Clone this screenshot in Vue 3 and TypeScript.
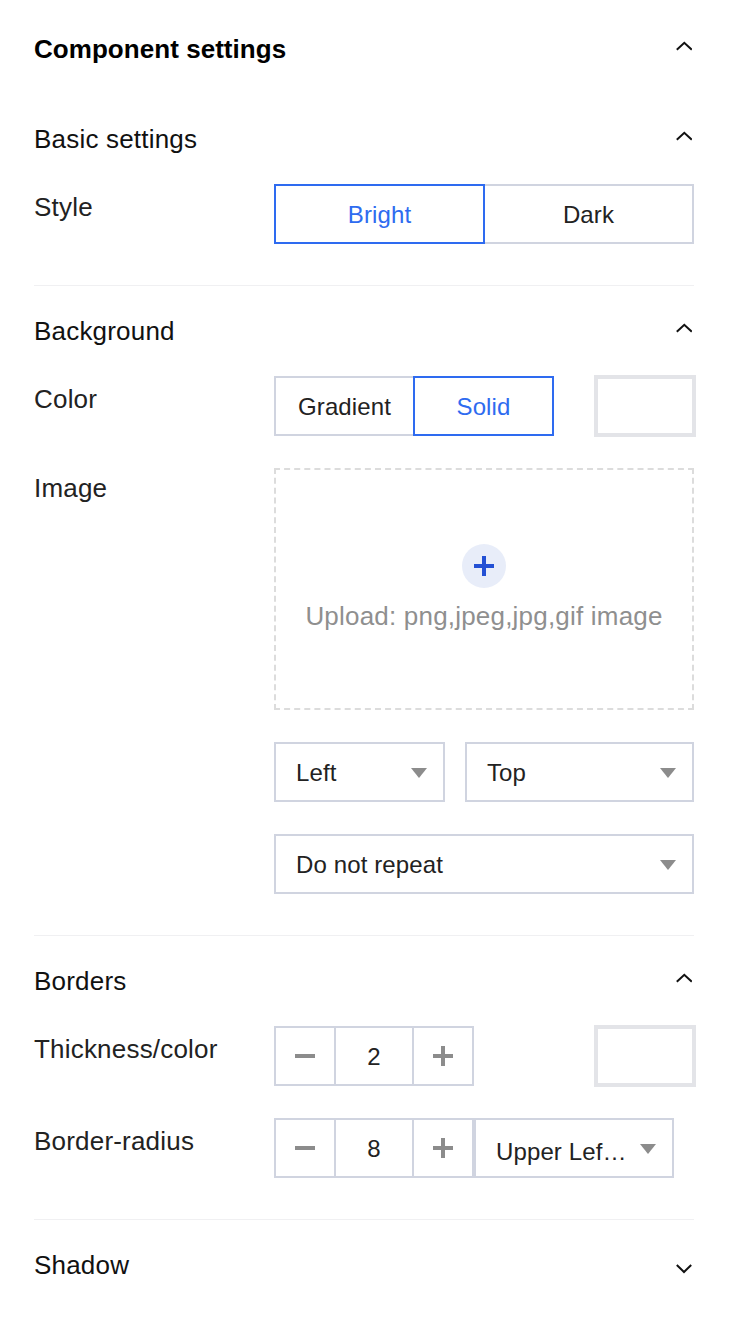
<script setup lang="ts">
const chevronUp = '0.8,8.8 8.3,1.8 15.8,8.8'
const chevronDown = '0.8,2 8,9 15.2,2'
</script>

<template>
  <main class="panel">
    <header class="head title">
      <h1>Component settings</h1>
      <svg class="chev" width="16" height="11" viewBox="0 0 16 11"><polyline :points="chevronUp" /></svg>
    </header>

    <section class="section first">
      <div class="head">
        <h2>Basic settings</h2>
        <svg class="chev" width="16" height="11" viewBox="0 0 16 11"><polyline :points="chevronUp" /></svg>
      </div>
      <div class="row">
        <label class="label">Style</label>
        <div class="seg wide">
          <button class="seg-btn on">Bright</button>
          <button class="seg-btn">Dark</button>
        </div>
      </div>
    </section>

    <section class="section">
      <div class="head">
        <h2>Background</h2>
        <svg class="chev" width="16" height="11" viewBox="0 0 16 11"><polyline :points="chevronUp" /></svg>
      </div>
      <div class="row">
        <label class="label">Color</label>
        <div class="seg narrow">
          <button class="seg-btn">Gradient</button>
          <button class="seg-btn on">Solid</button>
        </div>
        <div class="swatch"></div>
      </div>
      <div class="row">
        <label class="label image-label">Image</label>
        <div class="upload">
          <span class="upload-plus">
            <svg width="20" height="20" viewBox="0 0 20 20"><path d="M8 0h4v8h8v4h-8v8H8v-8H0V8h8z" /></svg>
          </span>
          <span class="upload-text">Upload: png,jpeg,jpg,gif image</span>
        </div>
      </div>
      <div class="row indent">
        <div class="select left"><span>Left</span><i class="caret"></i></div>
        <div class="select grow"><span>Top</span><i class="caret"></i></div>
      </div>
      <div class="row indent">
        <div class="select grow"><span>Do not repeat</span><i class="caret"></i></div>
      </div>
    </section>

    <section class="section">
      <div class="head">
        <h2>Borders</h2>
        <svg class="chev" width="16" height="11" viewBox="0 0 16 11"><polyline :points="chevronUp" /></svg>
      </div>
      <div class="row">
        <label class="label">Thickness/color</label>
        <div class="stepper">
          <span class="step"><svg width="20" height="4" viewBox="0 0 20 4"><path d="M0 0h20v4H0z" /></svg></span>
          <span class="val">2</span>
          <span class="step"><svg width="20" height="20" viewBox="0 0 20 20"><path d="M8 0h4v8h8v4h-8v8H8v-8H0V8h8z" /></svg></span>
        </div>
        <div class="swatch"></div>
      </div>
      <div class="row">
        <label class="label">Border-radius</label>
        <div class="stepper">
          <span class="step"><svg width="20" height="4" viewBox="0 0 20 4"><path d="M0 0h20v4H0z" /></svg></span>
          <span class="val">8</span>
          <span class="step"><svg width="20" height="20" viewBox="0 0 20 20"><path d="M8 0h4v8h8v4h-8v8H8v-8H0V8h8z" /></svg></span>
        </div>
        <div class="select corner"><span class="clip">Upper Lef…</span><i class="caret"></i></div>
      </div>
    </section>

    <section class="section">
      <div class="head">
        <h2>Shadow</h2>
        <svg class="chev down" width="16" height="11" viewBox="0 0 16 11"><polyline :points="chevronDown" /></svg>
      </div>
    </section>
  </main>
</template>

<style scoped>
.panel {
  width: 660px;
  height: 1320px;
  box-sizing: border-box;
  margin-left: 34px;
  padding-top: 25px;
  background: #fff;
  font-family: "Liberation Sans", Arial, sans-serif;
  font-size: 24px;
  letter-spacing: 0.12px;
  color: #222;
}
.head {
  display: flex;
  align-items: center;
  justify-content: space-between;
  height: 48px;
  margin-bottom: 21px;
}
.title {
  margin-bottom: 0;
}
h1 {
  margin: 0;
  font-size: 26px;
  font-weight: 700;
  letter-spacing: 0.05px;
  color: #000;
}
h2 {
  margin: 0;
  font-size: 26px;
  font-weight: 400;
  letter-spacing: 0.2px;
  color: #111;
}
.chev {
  margin: 0 2px 6px 0;
  fill: none;
  stroke: #111;
  stroke-width: 2;
}
.chev.down {
  margin: 6px 2px 0 0;
}
.section {
  padding: 21px 0 41px;
  border-top: 1px solid #f0f0f2;
}
.section.first {
  margin-top: 21px;
  border-top: 0;
}
.section:last-child {
  padding-bottom: 0;
}
.row {
  display: flex;
  min-height: 60px;
}
.row + .row {
  margin-top: 32px;
}
.indent {
  margin-left: 240px;
  gap: 20px;
}
.label {
  flex: none;
  width: 240px;
  font-size: 26px;
  letter-spacing: 0.2px;
  line-height: 46px;
}
.image-label {
  line-height: 40px;
}
.seg {
  display: flex;
}
.seg.wide {
  width: 420px;
}
.seg.narrow {
  width: 280px;
}
.seg-btn {
  flex: 1;
  height: 60px;
  padding: 2px 0 0;
  border: 2px solid #d0d4e0;
  background: #fff;
  font: inherit;
  letter-spacing: inherit;
  color: #222;
}
.seg-btn + .seg-btn {
  margin-left: -2px;
}
.seg-btn.on {
  position: relative;
  border-color: #2e6bf0;
  color: #2e6bf0;
}
.swatch {
  flex: none;
  box-sizing: border-box;
  width: 102px;
  height: 62px;
  margin: -1px -2px -1px auto;
  border: 4px solid #e3e4e8;
}
.upload {
  flex: 1;
  box-sizing: border-box;
  height: 242px;
  padding-top: 74px;
  border: 2px dashed #dcdcdc;
  display: flex;
  flex-direction: column;
  align-items: center;
}
.upload-plus {
  display: flex;
  align-items: center;
  justify-content: center;
  width: 44px;
  height: 44px;
  margin-bottom: 14px;
  border-radius: 50%;
  background: #e8edf9;
}
.upload-plus svg {
  fill: #2350d4;
}
.upload-text {
  font-size: 26px;
  letter-spacing: 0.2px;
  line-height: 28px;
  color: #8f8f8f;
}
.select {
  position: relative;
  box-sizing: border-box;
  height: 60px;
  padding: 2px 0 0 20px;
  border: 2px solid #d0d4e0;
  display: flex;
  align-items: center;
  line-height: 28px;
  color: #222;
}
.select.left {
  flex: none;
  width: 171px;
}
.select.grow {
  flex: 1;
}
.select.corner {
  flex: none;
  width: 200px;
}
.clip {
  margin-top: 6px;
  white-space: nowrap;
}
.caret {
  position: absolute;
  right: 16px;
  top: 24px;
  width: 0;
  height: 0;
  border-left: 8px solid transparent;
  border-right: 8px solid transparent;
  border-top: 10px solid #8c8c8c;
}
.stepper {
  flex: none;
  box-sizing: border-box;
  display: flex;
  width: 200px;
  height: 60px;
  border: 2px solid #d0d4e0;
}
.step {
  flex: none;
  width: 58px;
  display: flex;
  align-items: center;
  justify-content: center;
}
.step svg {
  fill: #8c8c8c;
}
.val {
  flex: none;
  box-sizing: border-box;
  width: 80px;
  text-align: center;
  line-height: 58px;
  border-left: 2px solid #d0d4e0;
  border-right: 2px solid #d0d4e0;
  color: #222;
}
</style>
